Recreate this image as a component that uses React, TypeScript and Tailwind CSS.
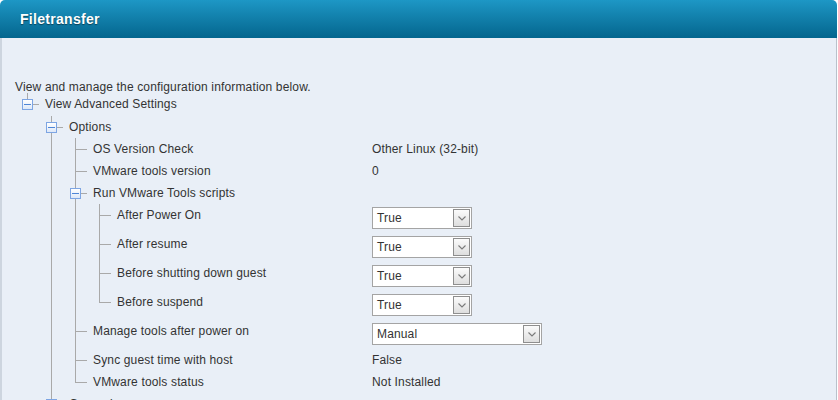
import React from "react";

type Value =
  | { kind: "text"; text: string }
  | { kind: "select"; text: string; wide?: boolean };

type Row = {
  label: string;
  guides: boolean[];
  last: boolean;
  expander?: "minus" | "plus";
  value?: Value;
  size: "a" | "b" | "c";
};

const rows: Row[] = [
  { label: "View Advanced Settings", guides: [], last: true, expander: "minus", size: "c" },
  { label: "Options", guides: [false], last: false, expander: "minus", size: "a" },
  { label: "OS Version Check", guides: [false, true], last: false, value: { kind: "text", text: "Other Linux (32-bit)" }, size: "a" },
  { label: "VMware tools version", guides: [false, true], last: false, value: { kind: "text", text: "0" }, size: "a" },
  { label: "Run VMware Tools scripts", guides: [false, true], last: false, expander: "minus", size: "a" },
  { label: "After Power On", guides: [false, true, true], last: false, value: { kind: "select", text: "True" }, size: "b" },
  { label: "After resume", guides: [false, true, true], last: false, value: { kind: "select", text: "True" }, size: "b" },
  { label: "Before shutting down guest", guides: [false, true, true], last: false, value: { kind: "select", text: "True" }, size: "b" },
  { label: "Before suspend", guides: [false, true, true], last: true, value: { kind: "select", text: "True" }, size: "b" },
  { label: "Manage tools after power on", guides: [false, true], last: false, value: { kind: "select", text: "Manual", wide: true }, size: "b" },
  { label: "Sync guest time with host", guides: [false, true], last: false, value: { kind: "text", text: "False" }, size: "a" },
  { label: "VMware tools status", guides: [false, true], last: true, value: { kind: "text", text: "Not Installed" }, size: "a" },
  { label: "General", guides: [false], last: false, expander: "plus", size: "a" },
];

const heightClass = { a: "h-[22px]", b: "h-[29px]", c: "h-[23px]" };

function Guide({ on }: { on: boolean }) {
  return <div className="w-6 shrink-0 flex">{on && <div className="ml-3 w-px bg-[#a9a9a9]" />}</div>;
}

function Expander({ kind }: { kind: "minus" | "plus" }) {
  return (
    <div className="w-[11px] h-[11px] shrink-0 border border-[#7da5e3] bg-gradient-to-b from-white to-[#dde8f8] flex items-center justify-center">
      {kind === "minus" ? (
        <div className="w-[7px] h-px bg-[#4f86d6]" />
      ) : (
        <svg width="7" height="7" viewBox="0 0 7 7">
          <rect x="0" y="3" width="7" height="1" fill="#4f86d6" />
          <rect x="3" y="0" width="1" height="7" fill="#4f86d6" />
        </svg>
      )}
    </div>
  );
}

function Connector({ last, expander }: { last: boolean; expander?: "minus" | "plus" }) {
  if (expander) {
    return (
      <div className="w-6 shrink-0 flex flex-col">
        <div className="h-[6px] ml-3 w-px bg-[#a9a9a9]" />
        <div className="h-[11px] ml-[7px] flex items-center">
          <Expander kind={expander} />
          <div className="flex-1 h-px bg-[#a9a9a9]" />
        </div>
        {!last && <div className="flex-1 ml-3 w-px bg-[#a9a9a9]" />}
      </div>
    );
  }
  return (
    <div className="w-6 shrink-0 flex flex-col">
      <div className="h-3 ml-3 border-l border-b border-[#a9a9a9]" />
      {!last && <div className="flex-1 ml-3 w-px bg-[#a9a9a9]" />}
    </div>
  );
}

function Select({ text, wide }: { text: string; wide?: boolean }) {
  return (
    <div
      className={`${wide ? "w-[170px]" : "w-[100px]"} h-[22px] border border-[#a4a4a4] bg-white flex items-center justify-between pl-[4px] pr-px`}
    >
      <span className="leading-none text-[#333]">{text}</span>
      <div className="w-[17px] h-[18px] border border-[#8e8e8e] bg-gradient-to-b from-[#fbfbfb] to-[#dedede] flex items-center justify-center">
        <svg width="8" height="5" viewBox="0 0 8 5">
          <polyline points="0.5,0.5 4,4 7.5,0.5" fill="none" stroke="#7a7a7a" strokeWidth="1.1" />
        </svg>
      </div>
    </div>
  );
}

function TreeRow({ row }: { row: Row }) {
  return (
    <div className={`flex ${heightClass[row.size]}`}>
      <div className="w-[357px] shrink-0 flex">
        {row.guides.map((g, i) => (
          <Guide key={i} on={g} />
        ))}
        <Connector last={row.last} expander={row.expander} />
        <div className="ml-[6px] leading-[22px] whitespace-nowrap">{row.label}</div>
      </div>
      <div className="flex-1">
        {row.value?.kind === "text" && <div className="leading-[22px]">{row.value.text}</div>}
        {row.value?.kind === "select" && (
          <div className="pt-[3px]">
            <Select text={row.value.text} wide={row.value.wide} />
          </div>
        )}
      </div>
    </div>
  );
}

export default function App() {
  return (
    <div
      className="h-screen overflow-hidden bg-white text-[12px] text-[#333] tracking-[0.15px]"
      style={{ fontFamily: '"Liberation Sans", Arial, sans-serif' }}
    >
      <div className="w-[837px]">
        <div className="h-[38px] rounded-t-[5px] bg-gradient-to-b from-[#1d97c5] to-[#04668e] flex items-center pl-5">
          <span className="text-white font-bold text-[14px] tracking-[0.3px] [text-shadow:0_1px_1px_rgba(0,0,0,0.45)]">
            Filetransfer
          </span>
        </div>
        <div className="h-[362px] bg-[#e9eff7] border-l-2 border-r border-l-[#cdd5df] border-r-[#b9c1cb] pl-[13px] pt-[42px]">
          <div className="h-[13px] leading-[14px]">View and manage the configuration information below.</div>
          <div className="flex flex-col">
            {rows.map((r, i) => (
              <TreeRow key={i} row={r} />
            ))}
          </div>
        </div>
      </div>
    </div>
  );
}
